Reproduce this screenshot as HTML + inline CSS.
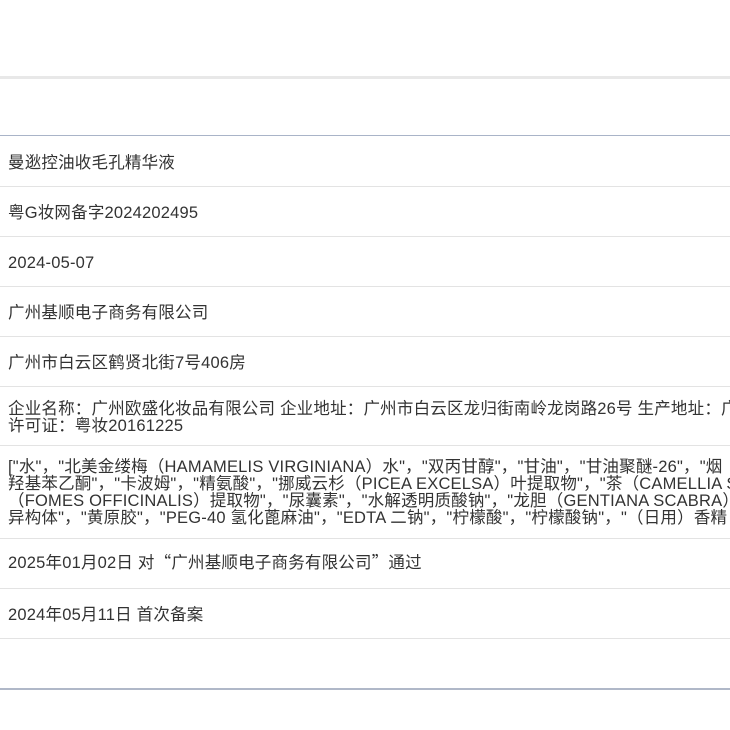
<!DOCTYPE html>
<html><head><meta charset="utf-8"><style>
body{margin:0;width:730px;height:730px;overflow:hidden;background:#fff;font-family:"Liberation Sans","Noto Sans CJK SC",sans-serif;color:#333;font-size:16.5px;}
.l{position:absolute;left:0;width:730px;}
.t{position:absolute;left:8px;white-space:nowrap;line-height:17px;letter-spacing:0.2px;}
.c{font-family:"Noto Sans CJK SC",sans-serif;}
</style></head><body>
<div class="l" style="top:76px;height:3px;background:#e8e8e8"></div>
<div class="l" style="top:135px;height:1px;background:#a9b4c8"></div>
<div class="l" style="top:186px;height:1px;background:#e3e3e3"></div>
<div class="l" style="top:236px;height:1px;background:#e3e3e3"></div>
<div class="l" style="top:286px;height:1px;background:#e3e3e3"></div>
<div class="l" style="top:336px;height:1px;background:#e3e3e3"></div>
<div class="l" style="top:386px;height:1px;background:#e3e3e3"></div>
<div class="l" style="top:445px;height:1px;background:#e3e3e3"></div>
<div class="l" style="top:538px;height:1px;background:#e3e3e3"></div>
<div class="l" style="top:588px;height:1px;background:#e3e3e3"></div>
<div class="l" style="top:638px;height:1px;background:#e3e3e3"></div>
<div class="l" style="top:688px;height:2px;background:#b0b8c8"></div>
<div class="t" style="top:155px">曼逖控油收毛孔精华液</div>
<div class="t" style="top:205px">粤G妆网备字2024202495</div>
<div class="t" style="top:255px">2024-05-07</div>
<div class="t" style="top:305px">广州基顺电子商务有限公司</div>
<div class="t" style="top:355px">广州市白云区鹤贤北街7号406房</div>
<div class="t" style="top:401px">企业名称：广州欧盛化妆品有限公司 企业地址：广州市白云区龙归街南岭龙岗路26号 生产地址：广州<br>许可证：粤妆20161225</div>
<div class="t" style="top:459px">["水"，"北美金缕梅（HAMAMELIS VIRGINIANA）水"，"双丙甘醇"，"甘油"，"甘油聚醚-26"，"烟<br>羟基苯乙酮"，"卡波姆"，"精氨酸"，"挪威云杉（PICEA EXCELSA）叶提取物"，"茶（CAMELLIA SI<br>（FOMES OFFICINALIS）提取物"，"尿囊素"，"水解透明质酸钠"，"龙胆（GENTIANA SCABRA）<br>异构体"，"黄原胶"，"PEG-40 氢化蓖麻油"，"EDTA 二钠"，"柠檬酸"，"柠檬酸钠"，"（日用）香精</div>
<div class="t" style="top:553px">2025年01月02日 对<span class="c">“</span>广州基顺电子商务有限公司<span class="c">”</span>通过</div>
<div class="t" style="top:607px">2024年05月11日 首次备案</div>
</body></html>
